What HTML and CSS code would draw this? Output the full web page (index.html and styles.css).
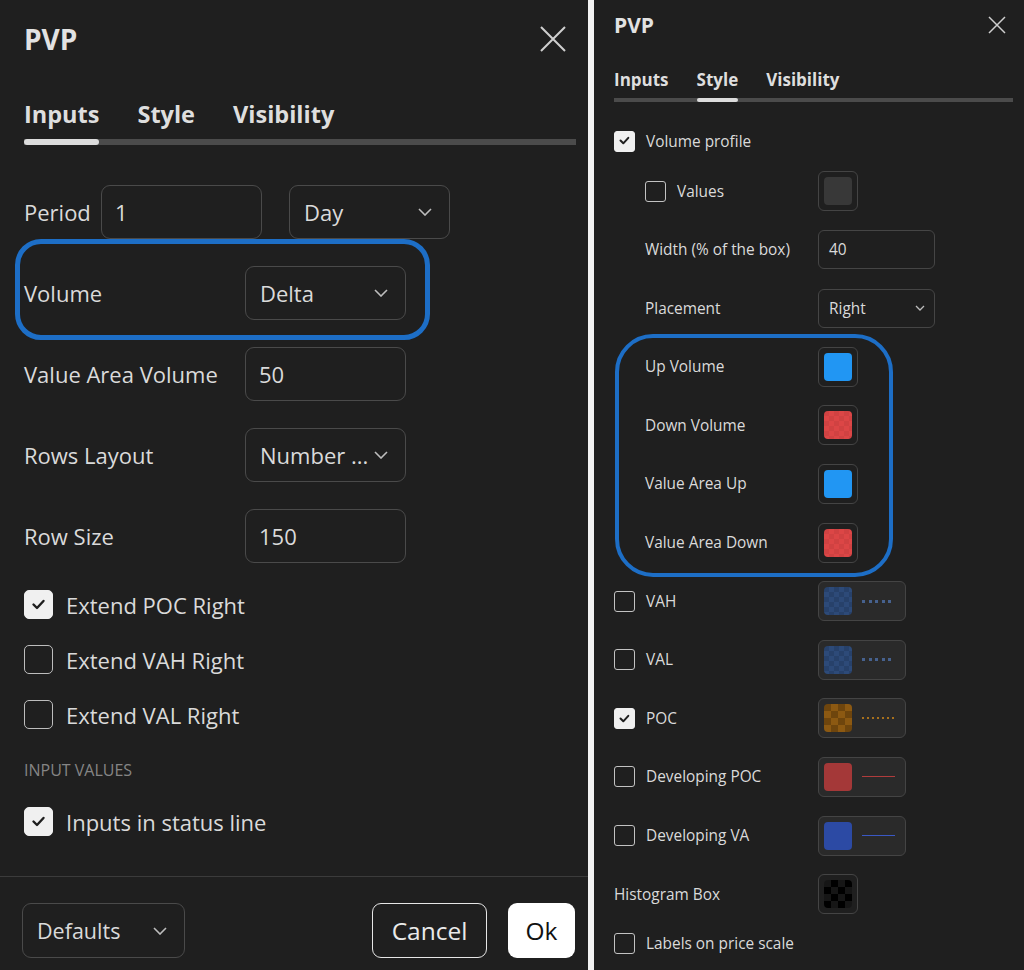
FILE: index.html
```html
<!DOCTYPE html>
<html>
<head>
<meta charset="utf-8">
<link rel="stylesheet" href="styles.css">
</head>
<body>
<div class="panel big">
  <div class="hdr">
    <div class="title">PVP</div>
    <svg class="close" viewBox="0 0 26 26" width="26" height="26"><path d="M1 1L25 25M25 1L1 25" stroke="#cfcfcf" stroke-width="2" fill="none"/></svg>
  </div>
  <div class="tabs">
    <div class="tab active">Inputs</div>
    <div class="tab">Style</div>
    <div class="tab">Visibility</div>
  </div>
  <div class="form">
    <div class="row period">
      <span class="lbl">Period</span>
      <div class="field first">1</div>
      <div class="field sel">Day<svg class="chev" viewBox="0 0 14 8" width="14" height="8"><path d="M1 1l6 6 6-6" fill="none" stroke="#bdbdbd" stroke-width="1.6"/></svg></div>
    </div>
    <div class="row hl">
      <span class="lbl">Volume</span>
      <div class="field sel">Delta<svg class="chev" viewBox="0 0 14 8" width="14" height="8"><path d="M1 1l6 6 6-6" fill="none" stroke="#bdbdbd" stroke-width="1.6"/></svg></div>
    </div>
    <div class="row">
      <span class="lbl">Value Area Volume</span>
      <div class="field">50</div>
    </div>
    <div class="row">
      <span class="lbl">Rows Layout</span>
      <div class="field sel">Number ...<svg class="chev" viewBox="0 0 14 8" width="14" height="8"><path d="M1 1l6 6 6-6" fill="none" stroke="#bdbdbd" stroke-width="1.6"/></svg></div>
    </div>
    <div class="row">
      <span class="lbl">Row Size</span>
      <div class="field">150</div>
    </div>
  </div>
  <div class="checks">
    <div class="crow"><span class="cb on"><svg viewBox="0 0 29 29" width="29" height="29"><path d="M9.5 14.5l3.5 3.5 6.5-7" fill="none" stroke="#1f1f1f" stroke-width="2.4" stroke-linecap="round" stroke-linejoin="round"/></svg></span>Extend POC Right</div>
    <div class="crow"><span class="cb"></span>Extend VAH Right</div>
    <div class="crow"><span class="cb"></span>Extend VAL Right</div>
  </div>
  <div class="section">INPUT VALUES</div>
  <div class="checks status">
    <div class="crow"><span class="cb on"><svg viewBox="0 0 29 29" width="29" height="29"><path d="M9.5 14.5l3.5 3.5 6.5-7" fill="none" stroke="#1f1f1f" stroke-width="2.4" stroke-linecap="round" stroke-linejoin="round"/></svg></span>Inputs in status line</div>
  </div>
  <div class="footer">
    <div class="field sel defaults">Defaults<svg class="chev" viewBox="0 0 14 8" width="14" height="8"><path d="M1 1l6 6 6-6" fill="none" stroke="#bdbdbd" stroke-width="1.6"/></svg></div>
    <div class="btn cancel">Cancel</div>
    <div class="btn ok">Ok</div>
  </div>
</div>

<div class="panel small">
  <div class="hdr">
    <div class="title">PVP</div>
    <svg class="close" viewBox="0 0 18 18" width="18" height="18"><path d="M1 1L17 17M17 1L1 17" stroke="#cfcfcf" stroke-width="1.5" fill="none"/></svg>
  </div>
  <div class="tabs">
    <div class="tab">Inputs</div>
    <div class="tab active">Style</div>
    <div class="tab">Visibility</div>
  </div>
  <div class="list">
    <div class="srow"><span class="slbl"><span class="scb on"><svg viewBox="0 0 21 21" width="21" height="21"><path d="M6.5 10.5l2.8 2.8 5-5.5" fill="none" stroke="#1f1f1f" stroke-width="2" stroke-linecap="round" stroke-linejoin="round"/></svg></span>Volume profile</span></div>
    <div class="srow ind tight"><span class="slbl"><span class="scb"></span>Values</span><span class="sw"><i class="c-gray"></i></span></div>
    <div class="srow ind"><span class="slbl">Width (% of the box)</span><span class="sfield">40</span></div>
    <div class="srow ind"><span class="slbl">Placement</span><span class="sfield ssel">Right<svg viewBox="0 0 10 6" width="10" height="6"><path d="M1 1l4 4 4-4" fill="none" stroke="#bdbdbd" stroke-width="1.3"/></svg></span></div>
    <div class="grp">
      <div class="srow ind"><span class="slbl">Up Volume</span><span class="sw"><i class="c-blue"></i></span></div>
      <div class="srow ind"><span class="slbl">Down Volume</span><span class="sw"><i class="c-red"></i></span></div>
      <div class="srow ind"><span class="slbl">Value Area Up</span><span class="sw"><i class="c-blue"></i></span></div>
      <div class="srow ind"><span class="slbl">Value Area Down</span><span class="sw"><i class="c-red"></i></span></div>
    </div>
    <div class="srow"><span class="slbl"><span class="scb"></span>VAH</span><span class="sw wide"><i class="c-slate"></i><b class="ln dots-blue"></b></span></div>
    <div class="srow"><span class="slbl"><span class="scb"></span>VAL</span><span class="sw wide"><i class="c-slate"></i><b class="ln dots-blue"></b></span></div>
    <div class="srow"><span class="slbl"><span class="scb on"><svg viewBox="0 0 21 21" width="21" height="21"><path d="M6.5 10.5l2.8 2.8 5-5.5" fill="none" stroke="#1f1f1f" stroke-width="2" stroke-linecap="round" stroke-linejoin="round"/></svg></span>POC</span><span class="sw wide"><i class="c-orange"></i><b class="ln dots-orange"></b></span></div>
    <div class="srow"><span class="slbl"><span class="scb"></span>Developing POC</span><span class="sw wide"><i class="c-dred"></i><b class="ln line-red"></b></span></div>
    <div class="srow"><span class="slbl"><span class="scb"></span>Developing VA</span><span class="sw wide"><i class="c-dblue"></i><b class="ln line-blue"></b></span></div>
    <div class="srow"><span class="slbl">Histogram Box</span><span class="sw"><i class="c-black"></i></span></div>
    <div class="srow last"><span class="slbl"><span class="scb"></span>Labels on price scale</span></div>
  </div>
</div>
</body>
</html>
```

FILE: styles.css
```css
*, *::before, *::after { box-sizing: border-box; margin: 0; padding: 0; }
html, body { height: 970px; overflow: hidden; }
body {
  background: #f2f2f2;
  display: flex;
  gap: 6px;
  font-family: "Open Sans", "Noto Sans", sans-serif;
  color: #dadada;
}
.panel {
  background: #1f1f1f;
  height: 970px;
  display: flex;
  flex-direction: column;
}

/* ---------- big (left) panel ---------- */
.big { width: 588px; padding: 0 12px 0 24px; font-size: 22px; }
.big .hdr {
  height: 78px;
  display: flex;
  align-items: center;
  justify-content: space-between;
  padding-right: 10px;
}
.big .title { font-size: 28px; font-weight: 700; line-height: 1; color: #e2e2e2; }
.tabs {
  display: flex;
  background: linear-gradient(#4b4b4b, #4b4b4b) left bottom / 100% 6px no-repeat;
}
.tab { display: flex; flex-direction: column; font-weight: 700; color: #dedede; }
.tab::after { content: ""; display: block; border-radius: 3px; }
.tab.active::after { background: #dcdcdc; }
.big .tabs { margin-top: 20px; gap: 38px; }
.big .tab { font-size: 23.5px; line-height: 32px; gap: 9px; }
.big .tab::after { height: 6px; }

.form { margin-top: 40px; display: flex; flex-direction: column; gap: 27px; }
.row { display: flex; align-items: center; height: 54px; }
.lbl { width: 221px; }
.period .lbl { width: 77px; }
.field {
  width: 161px;
  height: 54px;
  border: 1px solid #4a4a4a;
  border-radius: 9px;
  display: flex;
  align-items: center;
  padding: 0 13px;
}
.field.sel { padding: 0 17px 0 14px; justify-content: space-between; }
.period .first { margin-right: 27px; }
.hl { position: relative; }
.hl::before {
  content: "";
  position: absolute;
  left: -9px;
  top: -27px;
  width: 415px;
  height: 101px;
  border: 5px solid #1d6ec6;
  border-radius: 26px;
}

.checks { margin-top: 27px; display: flex; flex-direction: column; gap: 26px; }
.crow { display: flex; align-items: center; height: 29px; gap: 13px; }
.cb {
  width: 29px;
  height: 29px;
  border: 1.5px solid #bdbdbd;
  border-radius: 5px;
  flex: none;
  display: flex;
}
.cb.on { background: #f0f0f0; border-color: #f0f0f0; }
.cb svg { margin: -1.5px; }
.section {
  margin-top: 31px;
  font-size: 16px;
  line-height: 20px;
  color: #858585;
}
.checks.status { margin-top: 27px; }

.footer {
  margin: auto -12px 0 -24px;
  border-top: 1px solid #3b3b3b;
  padding: 26px 13px 12px 22px;
  display: flex;
  align-items: center;
  gap: 21px;
}
.defaults { width: 163px; height: 55px; margin-right: auto; font-size: 21.5px; padding: 0 15px 0 15px; }
.btn {
  height: 55px;
  border-radius: 9px;
  display: flex;
  align-items: center;
  justify-content: center;
  font-size: 24.5px;
}
.cancel { width: 115px; border: 1px solid #e6e6e6; color: #eaeaea; }
.ok { width: 67px; background: #ffffff; color: #111; }

/* ---------- small (right) panel ---------- */
.small { flex: 1; padding: 0 11px 0 20px; font-size: 15.4px; }
.small .hdr {
  height: 50px;
  display: flex;
  align-items: center;
  justify-content: space-between;
  padding-right: 7px;
}
.small .title { font-size: 21px; font-weight: 700; line-height: 1; color: #e2e2e2; }
.small .tabs { margin-top: 19px; gap: 28px; background-size: 100% 4px; }
.small .tab { font-size: 17px; line-height: 22px; gap: 7px; }
.small .tab::after { height: 4px; border-radius: 2px; }

.list { margin-top: 19px; display: flex; flex-direction: column; gap: 18.6px; }
.srow { display: flex; align-items: center; height: 40px; }
.srow.tight { margin-top: -8.6px; }
.srow.last { margin-top: -9.6px; }
.slbl { width: 204px; display: flex; align-items: center; gap: 11px; flex: none; }
.ind .slbl { padding-left: 31px; }
.scb {
  width: 21px;
  height: 21px;
  border: 1.2px solid #c2c2c2;
  border-radius: 3px;
  flex: none;
  display: flex;
}
.scb.on { background: #f0f0f0; border-color: #f0f0f0; }
.scb svg { margin: -1.2px; }
.sfield {
  width: 117px;
  height: 39px;
  border: 1px solid #454545;
  border-radius: 6px;
  display: flex;
  align-items: center;
  padding: 0 10px;
}
.ssel { justify-content: space-between; padding: 0 9px 0 10px; }

.grp { position: relative; display: flex; flex-direction: column; gap: 18.6px; }
.grp::before {
  content: "";
  position: absolute;
  left: 1px;
  top: -13px;
  width: 278px;
  height: 243px;
  border: 4.5px solid #1d6ec6;
  border-radius: 38px;
}

.sw {
  width: 40px;
  height: 40px;
  border: 1px solid #444;
  border-radius: 6px;
  padding: 5px;
  display: flex;
  align-items: center;
  flex: none;
}
.sw i { display: block; width: 28px; height: 28px; border-radius: 4px; flex: none; }
.sw.wide { width: 88px; background: #2a2a2a; }
.ln { display: block; margin-left: 10px; width: 33px; }
.c-gray { background: #383838; }
.c-blue { background: #2196f3; }
.c-red { background: repeating-conic-gradient(#dc4646 0 25%, #d04242 0 50%) 0 0 / 10px 10px; }
.c-slate { background: repeating-conic-gradient(#2d4a78 0 25%, #27416a 0 50%) 0 0 / 10px 10px; }
.c-orange { background: repeating-conic-gradient(#8c5912 0 25%, #6e450d 0 50%) 0 0 / 14px 14px; }
.c-dred { background: #a43838; }
.c-dblue { background: #2c4aa4; }
.c-black { background: repeating-conic-gradient(#000 0 25%, #161616 0 50%) 0 0 / 14px 14px; }
.dots-blue { height: 3px; background: repeating-linear-gradient(90deg, #46618e 0 3px, transparent 3px 6.6px); }
.dots-orange { height: 2px; background: repeating-linear-gradient(90deg, #a8701c 0 2px, transparent 2px 5px); }
.line-red { height: 1px; background: #b03c3c; }
.line-blue { height: 1px; background: #3a58c4; }
```
